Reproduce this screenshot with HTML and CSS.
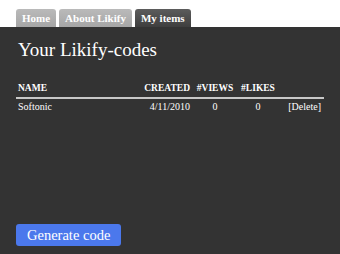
FILE: index.html
```html
<!DOCTYPE html>
<html lang="en">
<head>
  <meta charset="UTF-8" />
  <title>Likify</title>
  <link rel="stylesheet" href="styles.css">
</head>
<body>
  <nav class="tabs">
    <a class="tab" href="#">Home</a>
    <a class="tab" href="#">About Likify</a>
    <a class="tab active" href="#">My items</a>
  </nav>

  <div class="page">
    <h1>Your Likify-codes</h1>
    <table class="codes">
      <thead>
        <tr>
          <th class="name">Name</th>
          <th class="created">Created</th>
          <th class="count">#Views</th>
          <th class="count likes">#Likes</th>
          <th class="del"></th>
        </tr>
      </thead>
      <tbody>
        <tr>
          <td class="name">Softonic</td>
          <td class="created">4/11/2010</td>
          <td class="count">0</td>
          <td class="count likes">0</td>
          <td class="del"><a href="#">[Delete]</a></td>
        </tr>
      </tbody>
    </table>
    <button class="btn-main" type="button">Generate code</button>
  </div>
</body>
</html>
```

FILE: styles.css
```css
html, body {
  height: 100%;
}
body {
  font-family: 'Liberation Serif', serif;
  background: #333;
  margin: 0;
  padding: 0;
  display: flex;
  flex-direction: column;
}
.tabs {
  background: #fff;
  padding: 9px 16px 0;
  display: flex;
  gap: 3px;
  height: 18px;
}
.tab {
  font-size: 11px;
  font-weight: bold;
  line-height: 18px;
  padding: 0 6px;
  color: #fff;
  text-decoration: none;
  background: linear-gradient(#bababa, #a6a6a6);
  border-radius: 3px 3px 0 0;
}
.tab.active {
  background: linear-gradient(#5c5c5c, #3e3e3e);
}
.page {
  flex: 1;
  padding: 12px 16px 8px 16px;
  display: flex;
  flex-direction: column;
  color: #fff;
}
h1 {
  font-weight: normal;
  font-size: 19px;
  margin: 0 0 0 2px;
}
table.codes {
  margin-top: 22px;
  width: 308px;
  border-collapse: collapse;
  font-size: 10px;
  table-layout: fixed;
}
.codes th {
  text-transform: uppercase;
  font-weight: bold;
  font-size: 9.5px;
  padding: 0 0 4px;
  border-bottom: 2px solid #c8c8c8;
}
.codes td {
  padding: 2px 0;
}
.codes .name {
  width: 120px;
  text-align: left;
  padding-left: 2px;
}
.codes .created {
  width: 52px;
  text-align: right;
  padding-right: 2px;
}
.codes .count {
  width: 46px;
  text-align: center;
}
.codes .likes {
  width: 40px;
}
.codes .del {
  text-align: right;
  padding-right: 3px;
}
.codes a {
  color: #fff;
  text-decoration: none;
}
.btn-main {
  margin-top: auto;
  align-self: flex-start;
  font-family: 'Liberation Serif', serif;
  font-size: 14.5px;
  color: #fff;
  background: #4b78ec;
  border: none;
  border-radius: 3px;
  height: 22px;
  padding: 0 11px;
}
```
